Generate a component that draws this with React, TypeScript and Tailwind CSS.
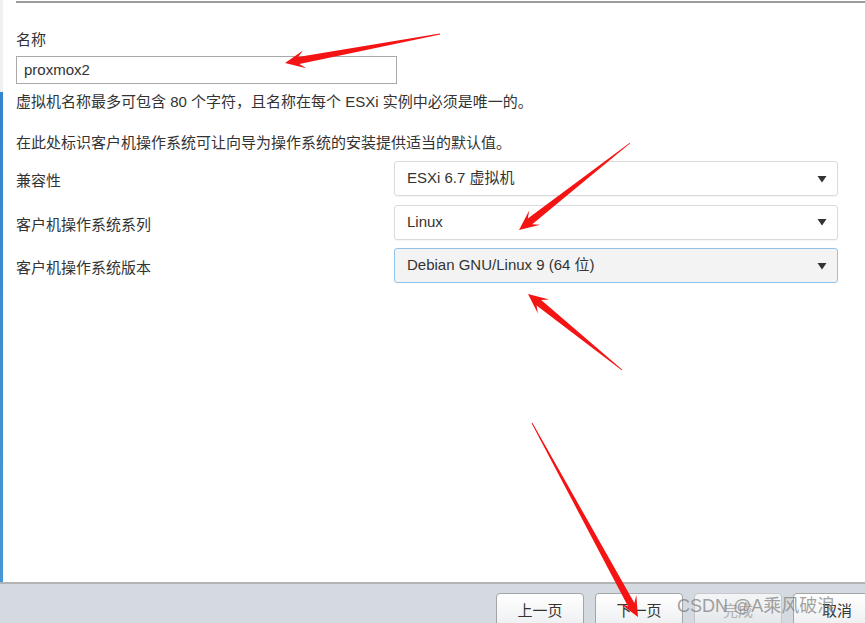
import React from 'react';

type Pt = [number, number];

// red annotation arrows drawn over the screenshot
const arrows: { tail: Pt; tip: Pt }[] = [
  { tail: [440, 34], tip: [285, 63] },
  { tail: [630, 143], tip: [519, 230] },
  { tail: [622, 370], tip: [528, 294] },
  { tail: [532, 423], tip: [638, 617] },
];

const arrowPoints = (tail: Pt, tip: Pt) => {
  const dx = tip[0] - tail[0];
  const dy = tip[1] - tail[1];
  const len = Math.hypot(dx, dy);
  const ux = dx / len;
  const uy = dy / len;
  const nx = -uy;
  const ny = ux;
  const hl = 20;
  const hw = 9;
  const sw = 3.6;
  const neck: Pt = [tip[0] - ux * hl * 0.7, tip[1] - uy * hl * 0.7];
  const barb: Pt = [tip[0] - ux * hl, tip[1] - uy * hl];
  const pts: Pt[] = [
    [tail[0] + nx * 0.4, tail[1] + ny * 0.4],
    [neck[0] + nx * sw, neck[1] + ny * sw],
    [barb[0] + nx * hw, barb[1] + ny * hw],
    tip,
    [barb[0] - nx * hw, barb[1] - ny * hw],
    [neck[0] - nx * sw, neck[1] - ny * sw],
    [tail[0] - nx * 0.4, tail[1] - ny * 0.4],
  ];
  return pts.map((p) => `${p[0].toFixed(1)},${p[1].toFixed(1)}`).join(' ');
};

const rows = [
  { label: '兼容性', value: 'ESXi 6.7 虚拟机', focus: false },
  { label: '客户机操作系统系列', value: 'Linux', focus: false },
  { label: '客户机操作系统版本', value: 'Debian GNU/Linux 9 (64 位)', focus: true },
];

const Caret = () => (
  <svg width="10" height="8" viewBox="0 0 10 8" className="shrink-0">
    <path d="M0.5 1 L9.5 1 L5 7.5 Z" fill="#333" />
  </svg>
);

const WizardButton = ({ text, disabled }: { text: string; disabled?: boolean }) => (
  <button
    className={
      disabled
        ? 'w-[88px] h-[36px] shrink-0 rounded-[4px] border border-[#c4c8cc] bg-gradient-to-b from-[#f4f5f6] to-[#e3e6e9] text-[15px] text-[#b0b0b0]'
        : 'w-[88px] h-[36px] shrink-0 rounded-[4px] border border-[#a3a6a9] bg-gradient-to-b from-[#ffffff] to-[#eceef0] text-[15px] text-[#333]'
    }
  >
    {text}
  </button>
);

export default function App() {
  return (
    <div className="relative w-[865px] h-[623px] overflow-hidden bg-white font-['Liberation_Sans','Noto_Sans_CJK_SC',sans-serif] text-[#333]">
      <div className="flex flex-col h-full">
        <div className="flex flex-1 min-h-0">
          {/* left edge of the wizard's step list */}
          <div className="w-[3px] flex flex-col shrink-0">
            <div className="h-[92px] bg-[#eef0f2]" />
            <div className="flex-1 bg-gradient-to-b from-[#3584cc] to-[#4596d6]" />
          </div>

          <div className="flex-1 pl-[13px]">
            <div className="mt-[1px] h-[2px] bg-[#9c9c9c]" />

            <div className="mt-[27px] text-[15px] leading-[20px]">名称</div>
            <div className="mt-[6px] w-[381px] h-[28px] border border-[#a9a9a9] flex items-center pl-[7px] text-[15px]">
              proxmox2
            </div>
            <div className="mt-[8px] text-[15px] leading-[20px]">
              虚拟机名称最多可包含 80 个字符，且名称在每个 ESXi 实例中必须是唯一的。
            </div>
            <div className="mt-[21px] text-[15px] leading-[20px]">
              在此处标识客户机操作系统可让向导为操作系统的安装提供适当的默认值。
            </div>

            <div className="mt-[8px] flex flex-col gap-[8.5px]">
              {rows.map((r) => (
                <div key={r.label} className="flex items-center">
                  <div className="w-[378px] pt-[5px] text-[15px] leading-[20px]">{r.label}</div>
                  <div
                    className={
                      r.focus
                        ? 'w-[444px] h-[35px] rounded-[3px] border border-[#8fc3ec] bg-[#f3f3f3] flex items-center justify-between pl-[12px] pr-[10px] text-[15px]'
                        : 'w-[444px] h-[35px] rounded-[3px] border border-[#dadada] bg-white flex items-center justify-between pl-[12px] pr-[10px] text-[15px] shadow-[0_1px_1px_rgba(0,0,0,0.04)]'
                    }
                  >
                    <span>{r.value}</span>
                    <Caret />
                  </div>
                </div>
              ))}
            </div>
          </div>
        </div>

        <div className="h-[41px] shrink-0 border-t-2 border-[#b3b3b3] bg-[#d4dae0] flex items-start gap-[11px] pl-[496px] pt-[9px] overflow-hidden">
          <WizardButton text="上一页" />
          <WizardButton text="下一页" />
          <WizardButton text="完成" disabled />
          <WizardButton text="取消" />
        </div>
      </div>

      {/* watermark */}
      <div className="absolute left-[677px] top-[594px] text-[18px] leading-[24px] text-[#7a7a7a]/70 whitespace-nowrap">
        CSDN @A乘风破浪
      </div>

      <svg className="absolute inset-0 pointer-events-none" width="865" height="623">
        {arrows.map((a, i) => (
          <polygon key={i} points={arrowPoints(a.tail, a.tip)} fill="#f51414" />
        ))}
      </svg>
    </div>
  );
}
